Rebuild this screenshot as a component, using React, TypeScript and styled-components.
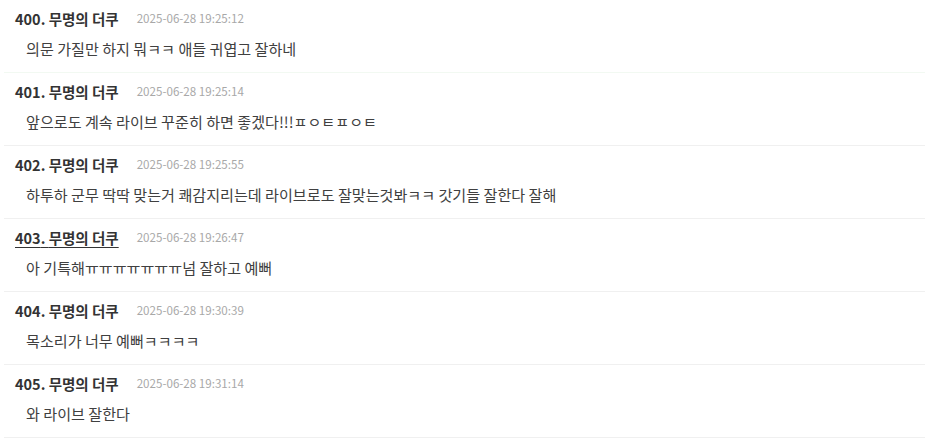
import * as React from 'react';
import styled, { createGlobalStyle } from 'styled-components';

const GlobalStyle = createGlobalStyle`
  html, body {
    margin: 0;
    padding: 0;
    background: #ffffff;
  }
  body {
    font-family: "Noto Sans CJK KR", "Noto Sans", sans-serif;
  }
`;

interface Comment {
  no: number;
  author: string;
  date: string;
  text: string;
  hover?: boolean;
}

const comments: Comment[] = [
  { no: 400, author: '무명의 더쿠', date: '2025-06-28 19:25:12', text: '의문 가질만 하지 뭐ㅋㅋ 애들 귀엽고 잘하네' },
  { no: 401, author: '무명의 더쿠', date: '2025-06-28 19:25:14', text: '앞으로도 계속 라이브 꾸준히 하면 좋겠다!!!ㅍㅇㅌㅍㅇㅌ' },
  {
    no: 402,
    author: '무명의 더쿠',
    date: '2025-06-28 19:25:55',
    text: '하투하 군무 딱딱 맞는거 쾌감지리는데 라이브로도 잘맞는것봐ㅋㅋ 갓기들 잘한다 잘해',
  },
  { no: 403, author: '무명의 더쿠', date: '2025-06-28 19:26:47', text: '아 기특해ㅠㅠㅠㅠㅠㅠㅠ넘 잘하고 예뻐', hover: true },
  { no: 404, author: '무명의 더쿠', date: '2025-06-28 19:30:39', text: '목소리가 너무 예뻐ㅋㅋㅋㅋ' },
  { no: 405, author: '무명의 더쿠', date: '2025-06-28 19:31:14', text: '와 라이브 잘한다' },
];

const List = styled.ul`
  list-style: none;
  margin: 0 0 0 4px;
  padding: 0;
`;

const Row = styled.li<{ $first?: boolean }>`
  padding: 8px 0 14px 11px;
  border-bottom: 1px solid ${p => (p.$first ? '#f2f9f2' : '#f0f0f0')};
`;

const Meta = styled.div`
  display: flex;
  align-items: center;
  height: 20px;
`;

const Author = styled.a<{ $hover?: boolean }>`
  font-size: 14.5px;
  font-weight: 700;
  color: #333333;
  text-decoration: ${p => (p.$hover ? 'underline' : 'none')};
  text-underline-offset: 3px;
`;

const DateText = styled.span`
  margin-left: 18px;
  font-size: 11.6px;
  color: #a8a8a8;
`;

const Body = styled.div`
  margin-top: 10px;
  padding-left: 11px;
  font-size: 15.1px;
  line-height: 20px;
  color: #404040;
`;

export default function App() {
  return (
    <>
      <GlobalStyle />
      <List>
        {comments.map((c, i) => (
          <Row key={c.no} $first={i === 0}>
            <Meta>
              <Author $hover={c.hover}>
                {c.no}. {c.author}
              </Author>
              <DateText>{c.date}</DateText>
            </Meta>
            <Body>{c.text}</Body>
          </Row>
        ))}
      </List>
    </>
  );
}
